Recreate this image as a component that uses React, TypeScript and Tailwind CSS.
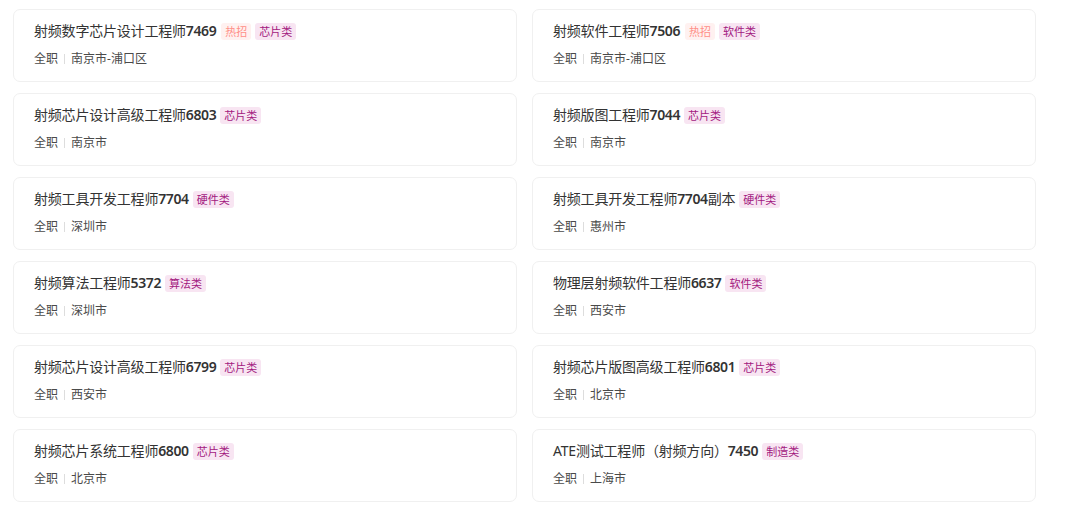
import React from "react";

type Job = { title: string; num: string; suffix?: string; hot?: boolean; cat: string; loc: string };

const jobs: Job[] = [
  { title: "射频数字芯片设计工程师", num: "7469", hot: true, cat: "芯片类", loc: "南京市-浦口区" },
  { title: "射频软件工程师", num: "7506", hot: true, cat: "软件类", loc: "南京市-浦口区" },
  { title: "射频芯片设计高级工程师", num: "6803", cat: "芯片类", loc: "南京市" },
  { title: "射频版图工程师", num: "7044", cat: "芯片类", loc: "南京市" },
  { title: "射频工具开发工程师", num: "7704", cat: "硬件类", loc: "深圳市" },
  { title: "射频工具开发工程师", num: "7704", suffix: "副本", cat: "硬件类", loc: "惠州市" },
  { title: "射频算法工程师", num: "5372", cat: "算法类", loc: "深圳市" },
  { title: "物理层射频软件工程师", num: "6637", cat: "软件类", loc: "西安市" },
  { title: "射频芯片设计高级工程师", num: "6799", cat: "芯片类", loc: "西安市" },
  { title: "射频芯片版图高级工程师", num: "6801", cat: "芯片类", loc: "北京市" },
  { title: "射频芯片系统工程师", num: "6800", cat: "芯片类", loc: "北京市" },
  { title: "ATE测试工程师（射频方向）", num: "7450", cat: "制造类", loc: "上海市" },
];

function Card({ job }: { job: Job }) {
  return (
    <div className="h-[73px] rounded-[7px] border border-[#f0f0f0] bg-white pl-[20px] pt-[11px]">
      <div className="flex h-[20px] items-center">
        <span className="text-[14px] leading-[20px] tracking-[-0.2px] text-[#333333]">
          {job.title}
          <span className="font-semibold tracking-[-0.4px]">{job.num}</span>
          {job.suffix}
        </span>
        {job.hot && (
          <span className="ml-[5px] flex h-[17px] items-center rounded-[3px] bg-[#fff1f0] px-[4px] text-[11px] leading-[17px] text-[#ff8f87]">
            热招
          </span>
        )}
        <span className="ml-[4px] flex h-[17px] items-center rounded-[3px] bg-[#f8e5f2] px-[4px] text-[11px] leading-[17px] text-[#a3197f]">
          {job.cat}
        </span>
      </div>
      <div className="mt-[9px] flex h-[18px] items-center text-[12px] leading-[18px] text-[#4a4a4a]">
        <span>全职</span>
        <span className="mx-[6px] h-[10px] w-px bg-[#dddddd]" />
        <span>{job.loc}</span>
      </div>
    </div>
  );
}

export default function App() {
  return (
    <div
      className="min-h-[517px] w-[1080px] bg-white pl-[13px] pt-[9px]"
      style={{ fontFamily: '"Noto Sans", "Noto Sans CJK SC", sans-serif' }}
    >
      <div className="grid grid-cols-[504px_504px] gap-x-[15px] gap-y-[11px]">
        {jobs.map((j, i) => (
          <Card key={i} job={j} />
        ))}
      </div>
    </div>
  );
}
